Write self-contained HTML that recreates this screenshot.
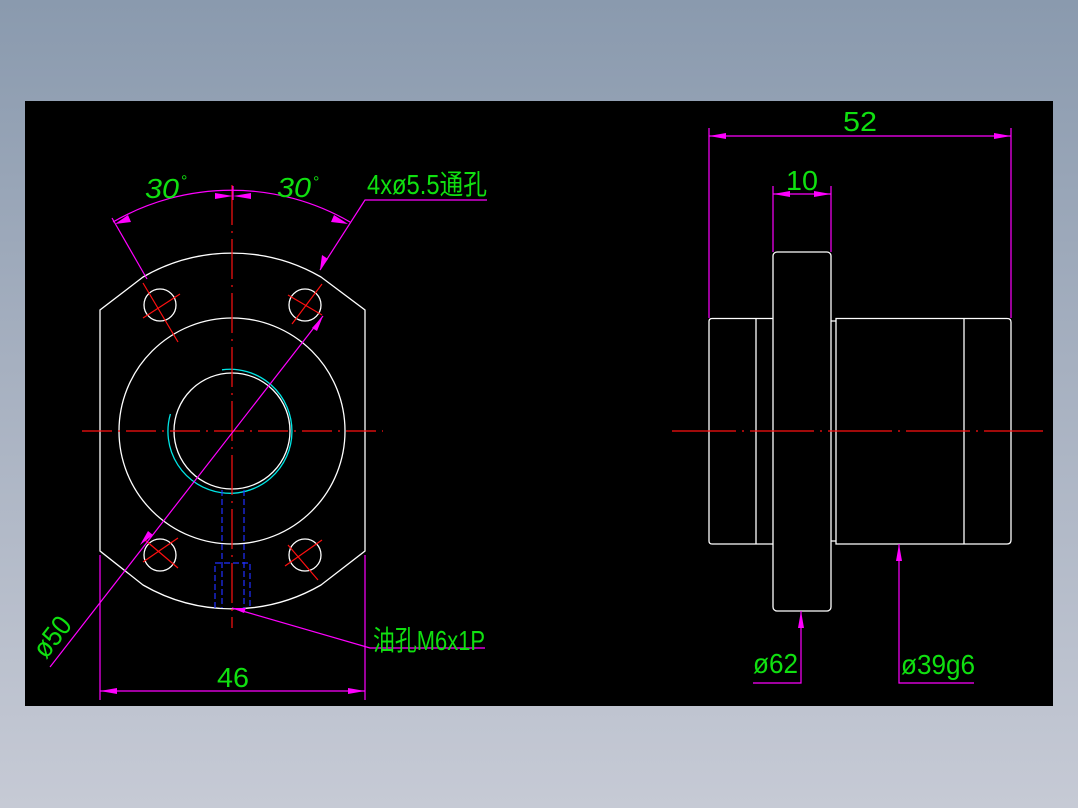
<!DOCTYPE html>
<html><head><meta charset="utf-8"><style>
html,body{margin:0;padding:0;}
body{width:1078px;height:808px;background:linear-gradient(#8a9aae 0%,#a6b0c0 45%,#c6cad5 100%);position:relative;overflow:hidden;}
svg{position:absolute;left:0;top:0;}
text{font-family:"Liberation Sans","Noto Sans CJK SC",sans-serif;fill:#10e010;}
</style></head><body>
<svg width="1078" height="808" viewBox="0 0 1078 808">
<rect x="25" y="101" width="1028" height="605" fill="#000"/>
<g fill="none" stroke="#fff" stroke-width="1.3">
<path d="M143,277 A178,178 0 0 1 321,277 L365,310 L365,551 L321,585 A178,178 0 0 1 143,585 L100,551 L100,310 Z"/>
<circle cx="232" cy="431" r="113"/>
<circle cx="232" cy="431" r="58"/>
<circle cx="160" cy="305" r="16"/><circle cx="305" cy="305" r="16"/>
<circle cx="160" cy="555" r="16"/><circle cx="305" cy="555" r="16"/>
<path d="M712,318.5 L773,318.5 M773,544 L712,544 Q709,544 709,541 L709,321.5 Q709,318.5 712,318.5"/>
<line x1="756" y1="318.5" x2="756" y2="544"/>
<rect x="773" y="252" width="58" height="359" rx="4"/>
<path d="M831,321 L836,321 M831,541 L836,541"/>
<path d="M836,318.5 L1007,318.5 Q1011,318.5 1011,322 L1011,540 Q1011,544 1007,544 L836,544 Z"/>
<line x1="964" y1="318.5" x2="964" y2="544"/>
</g>
<path d="M222,369.8 A62,62 0 1 1 170.4,414" fill="none" stroke="#00e5e5" stroke-width="1.3"/>
<g stroke="#2030ff" stroke-width="1.2" fill="none" stroke-dasharray="6,3">
<line x1="222" y1="490" x2="222" y2="608"/><line x1="244" y1="490" x2="244" y2="608"/>
<path d="M215,608 L215,563 L250,563 L250,608"/>
</g>
<g stroke="#ff1010" stroke-width="1.2" fill="none">
<line x1="232" y1="185" x2="232" y2="628" stroke-dasharray="40,6,2,6"/>
<line x1="82" y1="431" x2="383" y2="431" stroke-dasharray="30,6,2,6"/>
<line x1="672" y1="431" x2="1043" y2="431" stroke-dasharray="64,6,2,6"/>
<line x1="143" y1="283" x2="178" y2="342"/><line x1="143" y1="318" x2="180" y2="294"/>
<line x1="292" y1="324" x2="322" y2="284"/><line x1="288" y1="295" x2="322" y2="315"/>
<line x1="143" y1="562" x2="178" y2="538"/><line x1="145" y1="540" x2="178" y2="568"/>
<line x1="288" y1="545" x2="318" y2="580"/><line x1="285" y1="566" x2="322" y2="540"/>
</g>
<g stroke="#ff00ff" stroke-width="1.2" fill="none">
<path d="M113,222 A237,237 0 0 1 350,222"/>
<line x1="112" y1="218" x2="147" y2="279"/>
<line x1="233" y1="186" x2="233" y2="200"/>
<path d="M320,270 L365,200 L487,200"/>
<line x1="50" y1="667" x2="323" y2="316"/>
<path d="M232,608 L370,648 L485,648"/>
<line x1="100" y1="555" x2="100" y2="700"/><line x1="365" y1="555" x2="365" y2="700"/>
<line x1="100" y1="691" x2="365" y2="691"/>
<line x1="709" y1="128" x2="709" y2="318"/><line x1="1011" y1="128" x2="1011" y2="318"/>
<line x1="709" y1="136" x2="1011" y2="136"/>
<line x1="773" y1="186" x2="773" y2="252"/><line x1="831" y1="186" x2="831" y2="252"/>
<line x1="773" y1="194" x2="831" y2="194"/>
<path d="M801,611 L801,683 L753,683"/>
<path d="M899,544 L899,683 L974,683"/>
</g>
<g fill="#ff00ff">
<polygon points="115,224 128,215 131,222"/>
<polygon points="348,224 334,215 331,222"/>
<polygon points="233,196 215,193 215,199"/>
<polygon points="233,196 251,193 251,199"/>
<polygon points="320,270 322,255 328,259"/>
<polygon points="323,316 312,328 317,331"/>
<polygon points="140,545 148,531 153,535"/>
<polygon points="232,608 246,608 244,613"/>
<polygon points="100,691 117,688 117,694"/><polygon points="365,691 348,688 348,694"/>
<polygon points="709,136 726,133 726,139"/><polygon points="1011,136 994,133 994,139"/>
<polygon points="773,194 790,191 790,197"/><polygon points="831,194 814,191 814,197"/>
<polygon points="801,611 798,628 804,628"/><polygon points="899,544 896,561 902,561"/>
</g>
<g font-size="28">
<text x="145" y="198" textLength="34" lengthAdjust="spacingAndGlyphs" font-style="italic">30</text>
<text x="181" y="186" font-size="16">°</text>
<text x="277" y="197" textLength="34" lengthAdjust="spacingAndGlyphs" font-style="italic">30</text>
<text x="313" y="187" font-size="16">°</text>
<text x="367" y="194" textLength="120" lengthAdjust="spacingAndGlyphs">4xø5.5通孔</text>
<text x="217" y="687" textLength="32" lengthAdjust="spacingAndGlyphs">46</text>
<text x="373" y="650" textLength="112" lengthAdjust="spacingAndGlyphs">油孔M6x1P</text>
<text x="843" y="131" textLength="34" lengthAdjust="spacingAndGlyphs">52</text>
<text x="786" y="190" textLength="32" lengthAdjust="spacingAndGlyphs">10</text>
<text x="753" y="673" textLength="45" lengthAdjust="spacingAndGlyphs">ø62</text>
<text x="901" y="674" textLength="74" lengthAdjust="spacingAndGlyphs">ø39g6</text>
<text x="0" y="0" transform="translate(46,660) rotate(-52)" textLength="44" lengthAdjust="spacingAndGlyphs">ø50</text>
</g>
</svg>
</body></html>
